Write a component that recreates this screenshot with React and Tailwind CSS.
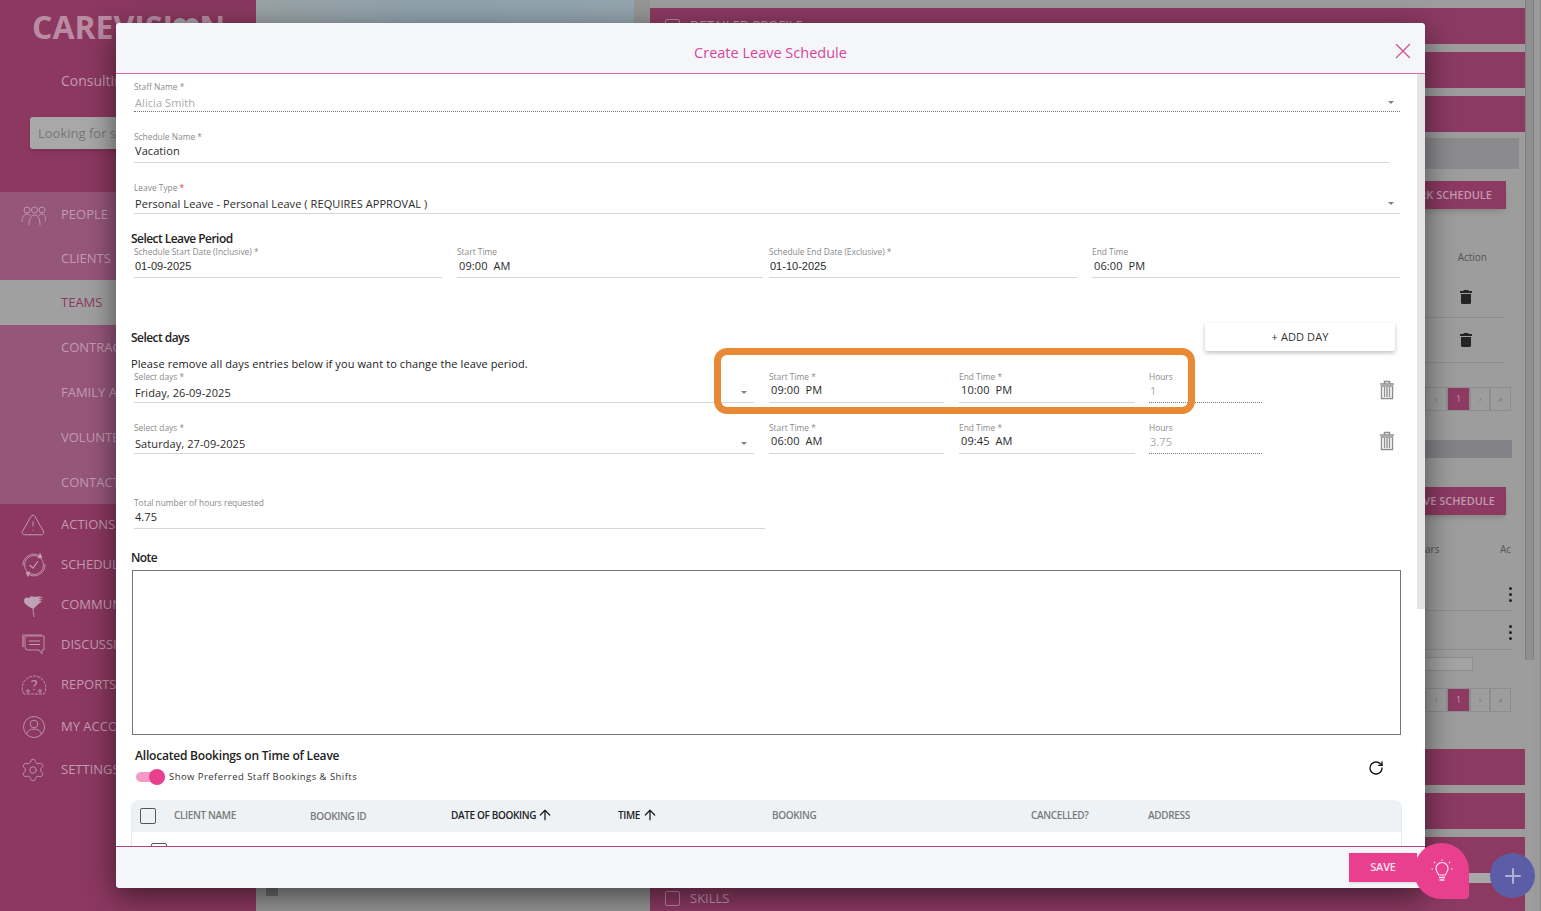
import React from "react";
import { ArrowUp, RotateCw, Plus, X, Settings, TriangleAlert } from "lucide-react";

const font = { fontFamily: '"Open Sans", sans-serif' };

const iconProps = { width: 28, height: 28, viewBox: "0 0 28 28", fill: "none", stroke: "#c29bb0", strokeWidth: 0.9 };

const PeopleIcon = () => (
  <svg {...iconProps}>
    <circle cx="7" cy="9" r="3" /><circle cx="14.5" cy="9" r="3" /><circle cx="22" cy="9" r="3" />
    <path d="M2 21c0-5 2-8 5-8 1.5 0 2.5.6 3.4 1.8M25.5 20c0-5-1-7-3.500-7-1.500 0-2.500.7-3.400 1.800M9 24c0-6 2-10 5.500-10s5.500 4 5.500 10" />
  </svg>
);
const ClockIcon = () => (
  <svg {...iconProps}>
    <circle cx="14" cy="14" r="9.500" />
    <path d="M9.500 14l3.500 3 5-7" strokeWidth="1.200" />
    <path d="M3 15a11 11 0 0 1 17-10M25 13a11 11 0 0 1-17 10" />
    <path d="M20 2.500l2 4-4 .5zM8 25.500l-2-4 4-.5z" fill="#c29bb0" />
  </svg>
);
const HeartsIcon = () => (
  <svg {...iconProps}>
    <path d="M13 18C8 15 4 13 4 9.500 4 7 7 5.500 9 7c1.500-2 3.500-2 5-1 3-1 8-.5 9 .5-2 0-4 .5-5 1 1 0 4 0 5 1-1.500 0-3.500 0-4.500 1 1 0 3 .2 3.500 1-2 .5-5 4-9 7.500z" fill="#bfa3b4" stroke="none" />
    <path d="M13 18l1 8" />
  </svg>
);
const ChatIcon = () => (
  <svg {...iconProps}>
    <path d="M5 5h19v14h-2v4l-3-4H8a3 3 0 0 1-3-3z" />
    <path d="M3 5v11M9 10h11M9 13.500h11" strokeWidth="1.200" />
    <path d="M2 4h20" />
  </svg>
);
const GaugeIcon = () => (
  <svg {...iconProps}>
    <path d="M4 23c-5-8 1-18 10-18s15 10 10 18z" strokeDasharray="3 1" />
    <path d="M11.500 11c1-2 5-2 5 .5 0 2-2.500 2-2.500 4M14 18v1" strokeWidth="1.300" />
    <circle cx="8" cy="20" r="1.300" /><circle cx="20" cy="20" r="1.300" />
  </svg>
);
const AccountIcon = () => (
  <svg {...iconProps}>
    <circle cx="14" cy="14" r="10.500" />
    <circle cx="14" cy="11" r="3.800" />
    <path d="M6.500 21c1-3.500 4-5 7.500-5s6.500 1.500 7.500 5" />
  </svg>
);

function NavItem({ label, icon, className, textClass = "text-[#c29bb0]" }) {
  return (
    <div className={`flex items-center pl-[20px] ${className}`}>
      <span className="w-[41px] flex items-center shrink-0">{icon}</span>
      <span className={`text-[13px] whitespace-nowrap ${textClass}`}>{label}</span>
    </div>
  );
}

function Sidebar() {
  return (
    <aside className="w-[256px] shrink-0 h-full bg-[#8c3860] overflow-hidden">
      <div className="h-[192px] pt-[5px]">
        <div className="pl-[32px] flex items-center h-[44px] text-[32px] leading-none font-bold text-[#b98ca4] whitespace-nowrap">
          CAREVISI
          <svg width="26" height="20" viewBox="0 0 26 20" fill="#a8a0a8"><circle cx="7" cy="8" r="7" /><circle cx="19" cy="8" r="7" /></svg>
          N
        </div>
        <div className="pl-[61px] mt-[22px] text-[14px] leading-[20px] text-[#c29bb0]">Consulting</div>
        <div className="ml-[30px] mt-[26px] w-[200px] h-[32px] bg-[#a8a8a8] rounded-[3px] shadow-md flex items-center pl-[8px] pt-[2px] text-[13px] text-[#777777]">Looking for staff</div>
      </div>
      <div className="bg-[#96567a]">
        <NavItem className="h-[44px] pt-[2px]" label="PEOPLE" icon={<PeopleIcon />} />
        <NavItem className="h-[44px] pt-[2px]" label="CLIENTS" />
        <NavItem className="h-[45px] bg-[#a0a0a0]" textClass="text-[#8c3860]" label="TEAMS" />
        <NavItem className="h-[45px]" label="CONTRACTORS" />
        <NavItem className="h-[45px]" label="FAMILY ACCOUNTS" />
        <NavItem className="h-[45px]" label="VOLUNTEERS" />
        <NavItem className="h-[44px] pt-[2px]" label="CONTACTS" />
      </div>
      <NavItem className="h-[40px] pt-[2px]" label="ACTIONS" icon={<TriangleAlert size={26} color="#c29bb0" strokeWidth={0.9} />} />
      <NavItem className="h-[40px] pt-[2px]" label="SCHEDULE" icon={<ClockIcon />} />
      <NavItem className="h-[40px] pt-[2px]" label="COMMUNICATION" icon={<HeartsIcon />} />
      <NavItem className="h-[40px] pt-[2px]" label="DISCUSSIONS" icon={<ChatIcon />} />
      <NavItem className="h-[40px] pt-[2px]" label="REPORTS" icon={<GaugeIcon />} />
      <NavItem className="h-[40px] mt-[2px] pt-[2px]" label="MY ACCOUNT" icon={<AccountIcon />} />
      <NavItem className="h-[40px] mt-[3px] pt-[2px]" label="SETTINGS" icon={<Settings size={26} color="#c29bb0" strokeWidth={0.8} />} />
    </aside>
  );
}

function MagentaRow({ children, className = "" }) {
  return <div className={`h-[36px] bg-[#8c3a62] shrink-0 flex items-center pl-[15px] gap-[10px] text-[13px] text-[#c29bb0] ${className}`}>{children}</div>;
}

function CheckBoxBg() {
  return <span className="w-[15px] h-[15px] border border-[#b88aa3] rounded-[2px]" />;
}

function Pager() {
  const cell = "h-[24px] flex items-center justify-center border border-[#8d8d8d] text-[9px] text-[#777777]";
  return (
    <div className="flex justify-end mr-[14px] h-[24px]">
      <span className={`${cell} w-[22px]`}>‹</span>
      <span className={`${cell} w-[23px] bg-[#8c3a62] text-[#c29bb0]`}>1</span>
      <span className={`${cell} w-[20px]`}>›</span>
      <span className={`${cell} w-[21px] text-[#8c3a62]`}>»</span>
    </div>
  );
}

function BgTrash() {
  return (
    <svg width="12" height="14" viewBox="0 0 12 14" fill="#242424"><path d="M4 0h4l1 1h3v2H0V1h3zM1 4h10v8.500A1.500 1.500 0 0 1 9.500 14h-7A1.500 1.500 0 0 1 1 12.500z" /></svg>
  );
}

function RightPanel() {
  return (
    <section className="w-[875px] shrink-0 h-full flex flex-col pt-[8px] overflow-hidden">
      <MagentaRow><CheckBoxBg /> DETAILED PROFILE</MagentaRow>
      <MagentaRow className="mt-[8px]" />
      <MagentaRow className="mt-[8px]" />
      <div className="mt-[6px] h-[31px] mr-[6px] bg-[#8b8b8e] shrink-0" />
      <div className="mt-[12px] h-[28px] w-[260px] self-end mr-[19px] bg-[#8c3a62] shadow-md flex items-center justify-end pr-[14px] text-[11px] font-semibold text-[#c29bb0] shrink-0">ADD WORK SCHEDULE</div>
      <div className="mt-[41px] mr-[38px] text-right text-[10px] leading-[14px] text-[#555555] h-[14px] shrink-0">Action</div>
      <div className="h-[54px] mr-[20px] pt-[12px] border-b border-[#8d8d8d] flex items-center justify-end pr-[33px] shrink-0 w-[200px] self-end"><BgTrash /></div>
      <div className="h-[45px] mr-[20px] border-b border-[#8d8d8d] flex items-center justify-end pr-[33px] shrink-0 w-[200px] self-end"><BgTrash /></div>
      <div className="mt-[24px] shrink-0"><Pager /></div>
      <div className="mt-[29px] h-[18px] mr-[13px] bg-[#838387] shrink-0" />
      <div className="mt-[29px] h-[28px] w-[260px] self-end mr-[19px] bg-[#8c3a62] shadow-md flex items-center justify-end pr-[11px] text-[11px] font-semibold text-[#c29bb0] shrink-0">ADD LEAVE SCHEDULE</div>
      <div className="mt-[27px] mr-[14px] flex justify-between text-[10px] leading-[14px] text-[#555555] h-[14px] shrink-0 pl-[775px]"><span>ars</span><span>Ac</span></div>
      <div className="h-[55px] mr-[13px] pt-[23px] border-b border-[#8d8d8d] flex items-center justify-end shrink-0 w-[110px] self-end"><Kebab /></div>
      <div className="h-[39px] mr-[13px] pt-[5px] border-b border-[#8d8d8d] flex items-center justify-end shrink-0 w-[110px] self-end"><Kebab /></div>
      <div className="mt-[7px] h-[14px] mr-[52px] w-[200px] self-end bg-[#a3a3a3] border border-[#8d8d8d] shrink-0" />
      <div className="mt-[17px] shrink-0"><Pager /></div>
      <MagentaRow className="mt-[37px]" />
      <MagentaRow className="mt-[8px]" />
      <MagentaRow className="mt-[8px]" />
      <MagentaRow className="mt-[10px] h-[40px] items-start pt-[8px]"><span className="w-[15px] h-[15px] border border-[#b88aa3] rounded-[2px]" /> <span className="leading-[16px] -mt-[1px]">SKILLS</span></MagentaRow>
    </section>
  );
}

function Kebab() {
  return (
    <span className="flex flex-col gap-[3px]">
      <i className="w-[3px] h-[3px] rounded-full bg-[#222222]" /><i className="w-[3px] h-[3px] rounded-full bg-[#222222]" /><i className="w-[3px] h-[3px] rounded-full bg-[#222222]" />
    </span>
  );
}

function Caret({ className = "" }) {
  return <span className={`absolute w-0 h-0 border-x-[3.500px] border-x-transparent border-t-[3.500px] border-t-[#808080] ${className}`} />;
}

function Field({ label, value, className = "", gap = "mt-[2px]", pb = "pb-[4px]", dotted, muted, arial, caret, req, valueClass = "tracking-[0.08px]" }) {
  return (
    <div className={`relative ${className}`}>
      <div className="h-[10px] leading-[10px] text-[8.400px] text-[#8a8a8a] whitespace-nowrap">
        {label}
        {req && <span className="text-[#d33]"> *</span>}
      </div>
      <div className={`${gap} ${pb} border-b ${dotted ? "border-dotted border-[#777777]" : "border-[#d6d6d6]"}`}>
        <div
          className={`h-[14px] leading-[14px] pl-[1px] text-[11px] whitespace-pre ${muted ? "text-[#ababab]" : "text-[#2a2a2a]"} ${arial ? "font-['Liberation_Sans']" : ""} ${valueClass}`}
        >
          {value}
        </div>
      </div>
      {caret}
    </div>
  );
}

function OutlineTrash() {
  return (
    <svg width="16" height="20" viewBox="0 0 16 20" fill="none" stroke="#8f8f8f">
      <path d="M1 4h14M5.500 3.500V1.500h5v2" strokeWidth="1.600" />
      <path d="M2.500 6h11v12.500h-11z" strokeWidth="1.400" />
      <path d="M5.500 7v10M8 7v10M10.500 7v10" strokeWidth="1.400" />
    </svg>
  );
}

function DayRow({ day, start, end, hours, className = "" }) {
  return (
    <div className={`flex relative ${className}`}>
      <Field className="w-[620px] shrink-0" label="Select days *" value={day} gap="mt-[4px]" pb="pb-[2px]" caret={<Caret className="right-[7px] top-[19px]" />} />
      <Field className="w-[175px] ml-[15px] shrink-0" label="Start Time *" value={start} gap="mt-[1px]" pb="pb-[5px]" valueClass="pl-[2px] tracking-[0.1px]" />
      <Field className="w-[176px] ml-[15px] shrink-0" label="End Time *" value={end} gap="mt-[1px]" pb="pb-[5px]" valueClass="pl-[2px] tracking-[0.1px]" />
      <Field className="w-[113px] ml-[14px] shrink-0" label="Hours" value={hours} gap="mt-[2px]" pb="pb-[4px]" dotted muted />
      <span className="ml-[117px] mt-[8px]"><OutlineTrash /></span>
    </div>
  );
}

const thBase = "text-[10px] tracking-[-0.35px] shrink-0 flex items-center gap-[1px]";
const heading = "h-[16px] leading-[16px] text-[12px] font-semibold text-[#222222] tracking-[-0.55px]";

function Modal() {
  return (
    <div className="absolute left-[116px] top-[23px] w-[1309px] h-[865px] bg-white rounded-[4px] shadow-[0_8px_30px_rgba(0,0,0,0.55)] flex flex-col overflow-hidden">
      <header className="relative h-[51px] shrink-0 bg-[#f5f6fa] border-b border-[#dd66b0] flex items-center justify-center text-[14.500px] text-[#d6459a]">
        <span className="mt-[9px]">Create Leave Schedule</span>
        <X className="absolute right-[9px] top-[15px]" size={26} color="#cc5a96" strokeWidth={1.300} />
      </header>
      <div className="flex-1 flex min-h-0 overflow-hidden">
        <div className="w-[1301px] shrink-0 pl-[18px] overflow-hidden">
          <div className="w-[1266px]">
            <Field className="mt-[8px]" label="Staff Name *" value="Alicia Smith" gap="mt-[4px]" pb="pb-[1px]" dotted muted caret={<Caret className="right-[6px] top-[19px]" />} />
            <Field className="mt-[20px] w-[1255px]" label="Schedule Name *" value="Vacation" />
            <Field className="mt-[20px]" label="Leave Type" req value="Personal Leave - Personal Leave ( REQUIRES APPROVAL )" gap="mt-[4px]" pb="pb-[2px]" caret={<Caret className="right-[6px] top-[19px]" />} />
            <h3 className={`mt-[17px] -ml-[3px] ${heading}`}>Select Leave Period</h3>
            <div className="flex">
              <Field className="w-[308px] shrink-0" label="Schedule Start Date (Inclusive) *" value="01-09-2025" arial valueClass="" />
              <Field className="w-[306px] ml-[15px] shrink-0" label="Start Time" value="09:00  AM" valueClass="pl-[2px] tracking-[0.1px]" />
              <Field className="w-[308px] ml-[6px] shrink-0" label="Schedule End Date (Exclusive) *" value="01-10-2025" arial valueClass="" />
              <Field className="w-[308px] ml-[15px] shrink-0" label="End Time" value="06:00  PM" valueClass="pl-[2px] tracking-[0.1px]" />
            </div>
            <div className="mt-[45px] h-[28px] flex items-center justify-between">
              <h3 className={`-ml-[3px] mt-[2px] ${heading}`}>Select days</h3>
              <button className="w-[190px] h-[28px] mr-[5px] bg-white shadow-[0_2px_4px_rgba(0,0,0,0.25)] rounded-[2px] text-[11px] tracking-[0.1px] text-[#333333]">+ ADD DAY</button>
            </div>
            <p className="mt-[6px] -ml-[3px] h-[14px] leading-[14px] text-[11px] tracking-[0.1px] text-[#222222]">Please remove all days entries below if you want to change the leave period.</p>
            <DayRow className="mt-[1px]" day="Friday, 26-09-2025" start="09:00  PM" end="10:00  PM" hours="1" />
            <DayRow className="mt-[20px]" day="Saturday, 27-09-2025" start="06:00  AM" end="09:45  AM" hours="3.75" />
            <Field className="mt-[44px] w-[631px]" label="Total number of hours requested" value="4.75" />
            <h3 className={`mt-[21px] -ml-[3px] ${heading}`}>Note</h3>
            <div className="mt-[4px] -ml-[2px] w-[1269px] h-[165px] border border-[#777777]" />
            <div className="mt-[13px] flex justify-between">
              <div>
                <h3 className="ml-[1px] h-[16px] leading-[16px] text-[12px] font-semibold text-[#222222] tracking-[-0.2px]">Allocated Bookings on Time of Leave</h3>
                <div className="mt-[6px] h-[14px] flex items-center">
                  <span className="relative w-[29px] ml-[2px] h-[10px] rounded-full bg-[#f49ac6]">
                    <span className="absolute right-0 -top-[3px] w-[16px] h-[16px] rounded-full bg-[#e8408f]" />
                  </span>
                  <span className="ml-[4px] text-[9.500px] tracking-[0.45px] text-[#333333]">Show Preferred Staff Bookings &amp; Shifts</span>
                </div>
              </div>
              <RotateCw className="mr-[16px] mt-[12px]" size={16} color="#111111" strokeWidth={2} />
            </div>
            <div className="mt-[16px] -ml-[3px] w-[1271px] border-x border-[#e6e9ee] rounded-t-[8px]">
              <div className="h-[32px] bg-[#eff2f5] rounded-t-[8px] flex items-center font-semibold text-[#7a7a7a]">
                <span className="w-[42px] pl-[8px] shrink-0"><span className="block w-[16px] h-[16px] border border-[#555555] rounded-[2px]" /></span>
                <span className={`${thBase} w-[136px] -mt-[2px]`}>CLIENT NAME</span>
                <span className={`${thBase} w-[141px]`}>BOOKING ID</span>
                <span className={`${thBase} w-[167px] -mt-[2px] text-[#222222]`}>DATE OF BOOKING <ArrowUp size={16} color="#222222" strokeWidth={2} /></span>
                <span className={`${thBase} w-[154px] -mt-[2px] text-[#222222] gap-[2px]`}>TIME <ArrowUp size={16} color="#222222" strokeWidth={2} /></span>
                <span className={`${thBase} w-[259px] -mt-[2px]`}>BOOKING</span>
                <span className={`${thBase} w-[117px] -mt-[1px]`}>CANCELLED?</span>
                <span className={`${thBase} -mt-[1px]`}>ADDRESS</span>
              </div>
              <div className="h-[40px] pl-[19px] pt-[11px]"><span className="block w-[16px] h-[16px] border border-[#555555] rounded-[2px]" /></div>
            </div>
          </div>
        </div>
        <div className="w-[8px] h-[535px] shrink-0 bg-[#e4e4e4]" />
      </div>
      <footer className="h-[42px] shrink-0 bg-[#f5f6fa] border-t border-[#b0447f] flex items-center justify-end pr-[8px]">
        <button className="w-[68px] h-[29px] -mt-[1px] bg-[#e8408f] shadow-sm text-[11px] font-semibold text-[#fbe3ef] tracking-[-0.2px]">SAVE</button>
      </footer>
    </div>
  );
}

export default function App() {
  return (
    <div style={font} className="relative w-[1541px] h-[911px] overflow-hidden bg-[#9d9d9d] flex">
      <Sidebar />
      <div className="w-[394px] shrink-0 h-full bg-[#969696]">
        <div className="h-[24px] mr-[16px] bg-gradient-to-r from-[#9aa3a6] via-[#8fa2ae] to-[#95a5ae]" />
        <div className="ml-[10px] mt-[864px] w-[12px] h-[8px] bg-[#6d6d6d]" />
      </div>
      <RightPanel />
      <div className="w-[16px] shrink-0 h-full flex">
        <div className="w-[9px] h-[660px] bg-[#8f8f8f] border-r border-[#7f7f7f] border-l" />
        <div className="w-[7px] h-full bg-[#9b9b9b] border-r border-[#8a8a8a]" />
      </div>

      <Modal />

      <div className="absolute left-[714px] top-[348px] w-[481px] h-[66px] border-[7px] border-[#e88a35] rounded-[13px]" />

      <div className="absolute left-[1469px] top-[873px] w-[22px] h-[10px] bg-[#a8a8a8]" />
      <div className="absolute left-[1414px] top-[843px] w-[55px] h-[56px] bg-[#e8408f] rounded-[28px] rounded-br-[4px] flex items-center justify-center">
        <svg width="22" height="24" viewBox="0 0 22 24" fill="none" stroke="#ffe6f2" strokeWidth="1.100">
          <path d="M7.500 16c0-2-2.500-3-2.500-6.500a6 6 0 0 1 12 0c0 3.500-2.500 4.500-2.500 6.500z" />
          <path d="M8 18.500h6M8.500 21h5" strokeWidth="1.500" />
          <path d="M11 .5v1.500M3 3l1 1M19 3l-1 1M.5 10H2M20 10h1.500" />
        </svg>
      </div>
      <div className="absolute left-[1490px] top-[853px] w-[45px] h-[45px] rounded-full bg-[#5b5ea6] flex items-center justify-center">
        <Plus size={24} color="#aeb0d6" strokeWidth={2} />
      </div>
    </div>
  );
}
